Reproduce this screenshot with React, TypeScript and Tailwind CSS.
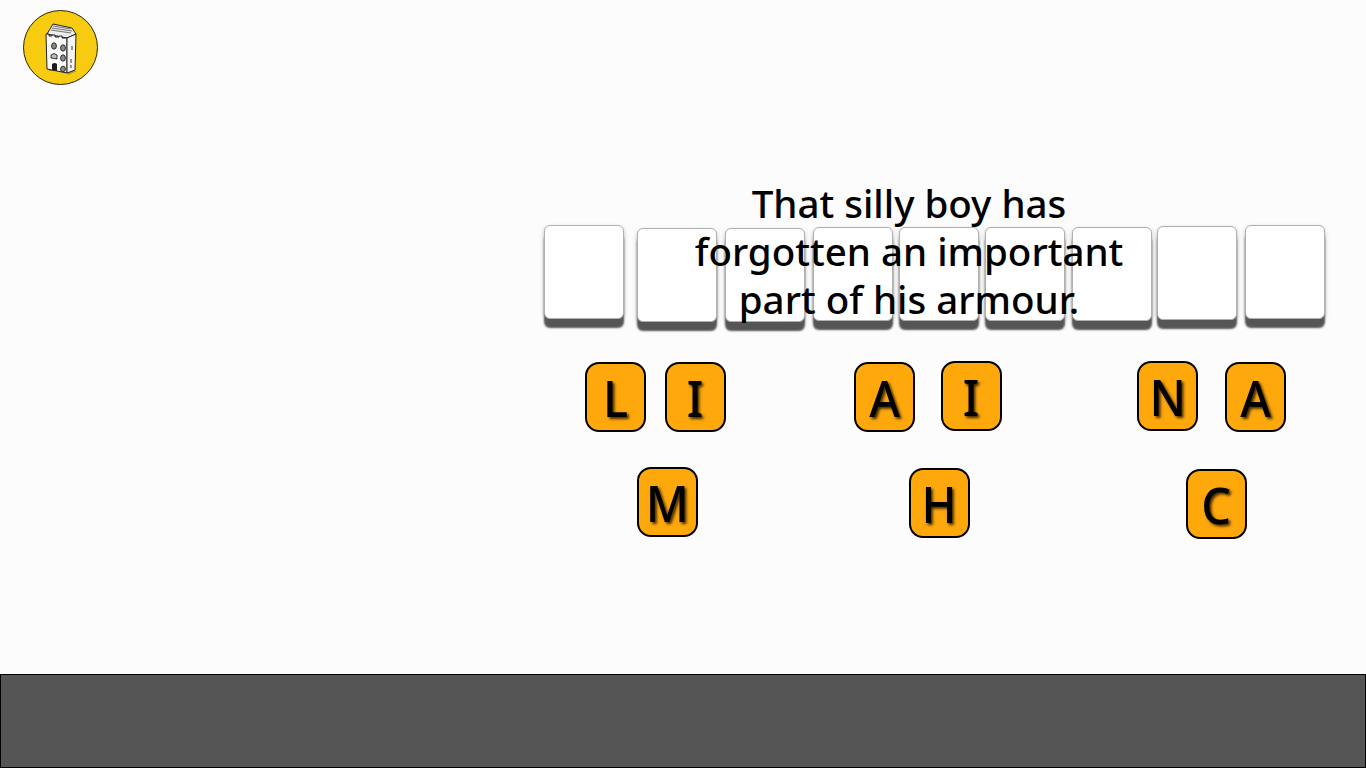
const slots = [
  'ml-0 mt-0',
  'ml-[13px] mt-[3px]',
  'ml-[8px] mt-[3px]',
  'ml-[8px] mt-[2px]',
  'ml-[6px] mt-[2px]',
  'ml-[6px] mt-[2px]',
  'ml-[7px] mt-[2px]',
  'ml-[5px] mt-[1px]',
  'ml-[8px] mt-0',
]

const tiles = [
  { letter: 'L', pos: 'left-[585px] top-[362px]' },
  { letter: 'I', pos: 'left-[665px] top-[362px]' },
  { letter: 'A', pos: 'left-[854px] top-[362px]' },
  { letter: 'I', pos: 'left-[941px] top-[361px]' },
  { letter: 'N', pos: 'left-[1137px] top-[361px]' },
  { letter: 'A', pos: 'left-[1225px] top-[362px]' },
  { letter: 'M', pos: 'left-[637px] top-[467px]' },
  { letter: 'H', pos: 'left-[909px] top-[468px]' },
  { letter: 'C', pos: 'left-[1186px] top-[469px]' },
]

function Logo() {
  return (
    <div className="flex h-[75px] w-[75px] items-center justify-center rounded-full border border-[#2a2410] bg-[#f7cb10]">
      {/* building, coordinates taken from the page */}
      <svg width="40" height="58" viewBox="40 18 40 58">
        <path d="M47 35 L67 39 L67 74 L76 70 L48 70 Z" fill="#6b5a10" opacity="0.45" />
        <path d="M46 33 L52 23 L71 27 L75 33 L66 37 Z" fill="#ededed" stroke="#222" strokeWidth="1" />
        <path d="M50 29 L70 32 M51 27 L71 30 M52 25 L70 28" stroke="#666" strokeWidth="0.9" />
        <path d="M45 33 L48 33 L48 35 L51 35 L51 34 L54 34 L54 36 L58 36 L58 35 L61 35 L61 37 L66 37 L66 72 L46 68 Z" fill="#fafafa" stroke="#222" strokeWidth="1" />
        <path d="M66 37 L75 33 L74 69 L66 72 Z" fill="#f4f4f4" stroke="#222" strokeWidth="1" />
        <ellipse cx="53" cy="45" rx="2.4" ry="3.2" fill="#8a8a8a" stroke="#222" strokeWidth="0.9" />
        <ellipse cx="62" cy="47" rx="2.4" ry="3.2" fill="#8a8a8a" stroke="#222" strokeWidth="0.9" />
        <path d="M50 54 Q53 51 56 54 L56 58 L50 57 Z" fill="#bbb" stroke="#222" strokeWidth="0.9" />
        <ellipse cx="62" cy="57" rx="2.4" ry="3.2" fill="#8a8a8a" stroke="#222" strokeWidth="0.9" />
        <ellipse cx="62" cy="68" rx="2.4" ry="2.8" fill="#8a8a8a" stroke="#222" strokeWidth="0.9" />
        <path d="M51 69 L51 63 Q54 61 56 63 L56 70 Z" fill="#1c1c1c" />
        <path d="M71 45 L71 49 M70 58 L70 62 M70 64 L70 67" stroke="#333" strokeWidth="1" />
      </svg>
    </div>
  )
}

export default function App() {
  return (
    <div className="relative flex h-screen w-full flex-col overflow-hidden bg-[#fcfcfc] font-['Noto_Sans',sans-serif] text-black">
      <div className="relative flex-1">
        <div className="pl-[23px] pt-[10px]">
          <Logo />
        </div>

        {/* slots */}
        <div className="ml-[544px] mt-[140px] flex items-start">
          {slots.map((cls, i) => (
            <div
              key={i}
              className={`h-[94px] w-[80px] rounded-[6px] border border-[#b0b0b0] bg-white shadow-[0_9px_2px_#555,0_2px_4px_rgba(0,0,0,0.25)] ${cls}`}
            />
          ))}
        </div>

        {/* letters */}
        {tiles.map((t, i) => (
          <div
            key={i}
            className={`absolute flex h-[70px] w-[61px] items-center justify-center rounded-[14px] border-2 border-black bg-[#ffa80c] text-[51px] font-medium leading-none [text-shadow:2px_2px_3px_rgba(0,0,0,0.75)] ${t.pos}`}
          >
            <span className="inline-block scale-x-[0.92]">{t.letter}</span>
          </div>
        ))}

        {/* clue */}
        <p className="absolute left-[644px] top-[179px] w-[530px] text-center text-[38.5px] font-medium leading-[48px]">
          That silly boy has
          <br />
          forgotten an important
          <br />
          part of his armour.
        </p>
      </div>
      <div className="h-[94px] border border-black bg-[#555555]" />
    </div>
  )
}
